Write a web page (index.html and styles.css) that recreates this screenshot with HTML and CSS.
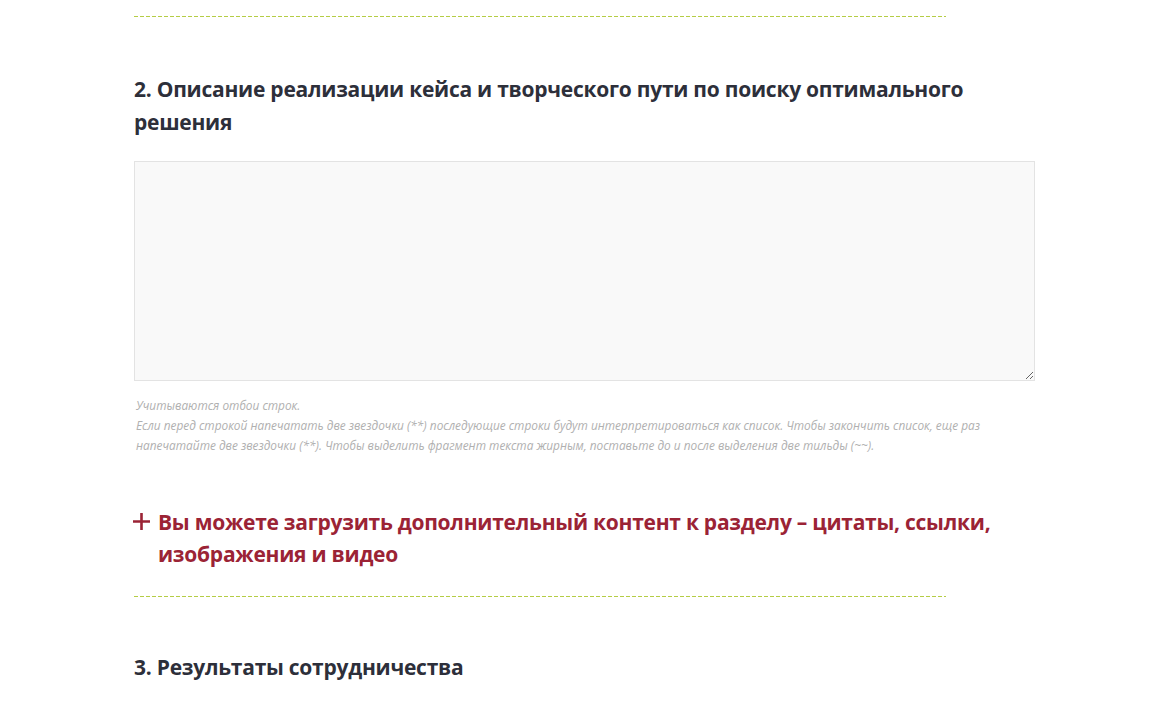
FILE: index.html
```html
<!DOCTYPE html>
<html lang="ru">
<head>
<meta charset="utf-8">
<link rel="stylesheet" href="styles.css">
</head>
<body>
<div class="page">
  <div class="sep sep-top"></div>
  <h2 class="title title-2">2. Описание реализации кейса и творческого пути по поиску оптимального решения</h2>
  <textarea class="field"></textarea>
  <div class="hint">Учитываются отбои строк.<br>Если перед строкой напечатать две звездочки (**) последующие строки будут интерпретироваться как список. Чтобы закончить список, еще раз напечатайте две звездочки (**). Чтобы выделить фрагмент текста жирным, поставьте до и после выделения две тильды (~~).</div>
  <div class="add">
    <svg class="plus" width="17" height="17" viewBox="0 0 17 17" aria-hidden="true"><path d="M8.5 0V17M0 8.5H17" stroke="#9b2335" stroke-width="2.6" fill="none"/></svg>
    <span class="add-text">Вы можете загрузить дополнительный контент к разделу – цитаты, ссылки, изображения и видео</span>
  </div>
  <div class="sep sep-bottom"></div>
  <h2 class="title title-3">3. Результаты сотрудничества</h2>
</div>
</body>
</html>
```

FILE: styles.css
```css
html, body {
  margin: 0;
  padding: 0;
  background: #ffffff;
}
body {
  padding-top: 16px;
}
.page {
  margin-left: 134px;
  width: 901px;
  font-family: "Open Sans", sans-serif;
}
.sep {
  width: 812px;
  height: 1px;
  background-image: linear-gradient(to right, #b5cd45 0, #b5cd45 4px, transparent 4px, transparent 6px);
  background-size: 6px 1px;
  background-repeat: repeat-x;
}
.title {
  margin: 0;
  font-size: 21px;
  font-weight: 700;
  line-height: 33px;
  color: #2d2f3a;
  letter-spacing: -0.25px;
}
.title-2 {
  margin-top: 56px;
}
.field {
  display: block;
  box-sizing: border-box;
  width: 901px;
  height: 220px;
  margin-top: 22px;
  background: #f9f9f9;
  border: 1px solid #e3e3e3;
  border-radius: 0;
  padding: 8px;
  resize: vertical;
  font-family: "Open Sans", sans-serif;
}
.hint {
  max-width: 860px;
  margin-top: 14px;
  padding-left: 2px;
  font-size: 11.85px;
  line-height: 20px;
  font-style: italic;
  color: #b0b0b0;
}
.add {
  display: flex;
  align-items: flex-start;
  margin-top: 51px;
  color: #9b2335;
  font-size: 21px;
  font-weight: 700;
  line-height: 32px;
}
.plus {
  flex: none;
  margin-top: 7px;
  margin-left: -1px;
  margin-right: 8px;
}
.add-text {
  letter-spacing: -0.25px;
}
.sep-bottom {
  margin-top: 26px;
}
.title-3 {
  margin-top: 54px;
}
```
